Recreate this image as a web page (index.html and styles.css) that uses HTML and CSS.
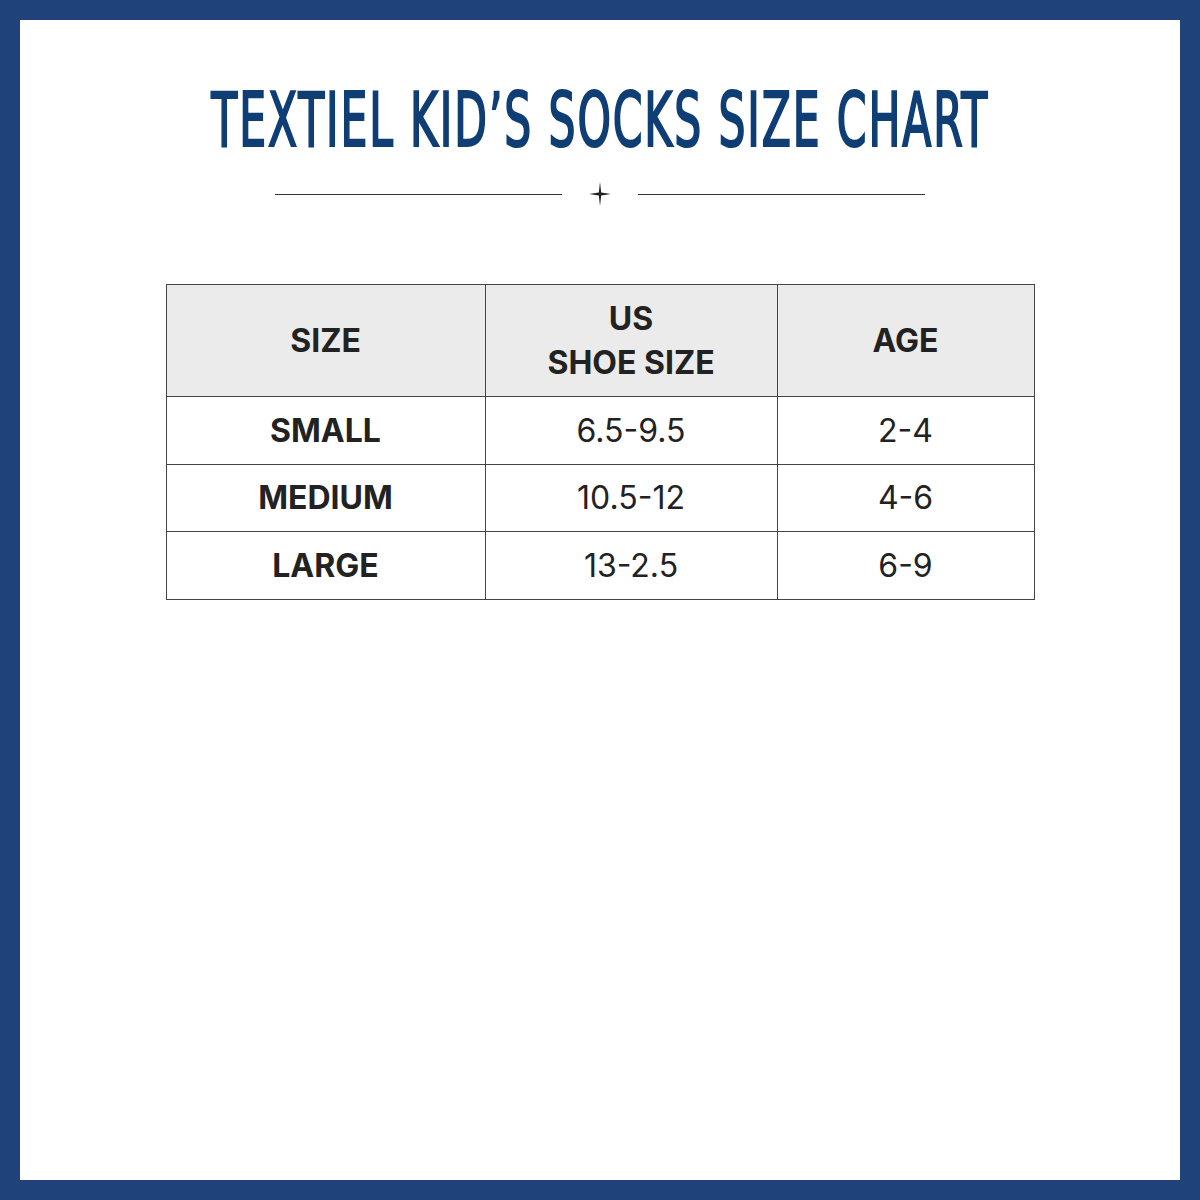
FILE: index.html
```html
<!DOCTYPE html>
<html lang="en">
<head>
  <meta charset="UTF-8" />
  <title>Textiel Kid's Socks Size Chart</title>
  <meta name="viewport" content="width=device-width, initial-scale=1.0" />
  <link rel="stylesheet" href="styles.css">
</head>
<body>
  <div class="frame">
    <h1 class="title">TEXTIEL KID’S SOCKS SIZE CHART</h1>
    <div class="divider">
      <span class="line"></span>
      <svg class="star" width="24" height="24" viewBox="0 0 24 24">
        <path d="M12 0 L13.2 10.4 L23 12 L13.2 13.6 L12 24 L10.8 13.6 L1 12 L10.8 10.4 Z" fill="#222" />
      </svg>
      <span class="line"></span>
    </div>
    <table class="chart">
      <thead>
        <tr>
          <th class="col-size">SIZE</th>
          <th class="col-shoe">US<br>SHOE SIZE</th>
          <th class="col-age">AGE</th>
        </tr>
      </thead>
      <tbody>
        <tr><th>SMALL</th><td>6.5-9.5</td><td>2-4</td></tr>
        <tr><th>MEDIUM</th><td>10.5-12</td><td>4-6</td></tr>
        <tr><th>LARGE</th><td>13-2.5</td><td>6-9</td></tr>
      </tbody>
    </table>
  </div>
</body>
</html>
```

FILE: styles.css
```css
* { box-sizing: border-box; }
body { margin: 0; background: #1e4279; font-family: Inter, 'Liberation Sans', sans-serif; }
.frame {
  margin: 20px;
  height: 1160px;
  background: #ffffff;
  display: flex;
  flex-direction: column;
  align-items: center;
  padding-top: 62px;
}
/* condensed headline: no Oswald offline, so squeeze DejaVu Condensed */
.title {
  margin: 0;
  font-family: 'DejaVu Sans Condensed', 'Liberation Sans Narrow', sans-serif;
  font-weight: normal;
  font-size: 75px;
  line-height: 76px;
  color: #0f3e75;
  -webkit-text-stroke: 2.2px #0f3e75;
  letter-spacing: 3px;
  transform: scaleX(0.63);
  white-space: nowrap;
}
.divider {
  display: flex;
  align-items: center;
  gap: 26px;
  margin-top: 24px;
}
.divider .line { width: 287px; height: 1px; background: #333; }
.star { display: block; }
.chart {
  margin-top: 78px;
  border-collapse: collapse;
  width: 869px;
  color: #222;
  font-size: 32px;
}
.chart th, .chart td {
  border: 1.5px solid #444;
  text-align: center;
  padding: 0;
  height: 67.5px;
}
.chart thead th {
  background: #ebebeb;
  height: 112px;
  line-height: 44px;
}
.chart th { font-weight: 700; }
.chart td { font-weight: 400; }
.col-size { width: 319px; }
.col-shoe { width: 292px; }
```
